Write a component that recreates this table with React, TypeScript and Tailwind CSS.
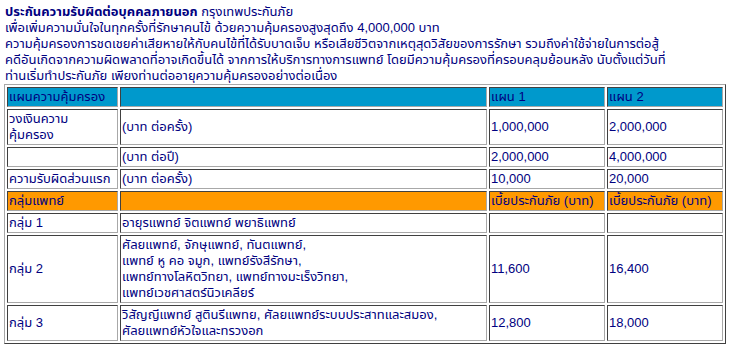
import React from "react";

const cell =
  "border border-solid border-t-[#404040] border-l-[#404040] border-r-[#a8a8a8] border-b-[#a8a8a8] px-[1px] py-[1px] align-middle text-left font-normal";

type Row = { label: string[]; desc: string[]; p1: string; p2: string };

const coverage: Row[] = [
  { label: ["วงเงินความ", "คุ้มครอง"], desc: ["(บาท ต่อครั้ง)"], p1: "1,000,000", p2: "2,000,000" },
  { label: [""], desc: ["(บาท ต่อปี)"], p1: "2,000,000", p2: "4,000,000" },
  { label: ["ความรับผิดส่วนแรก"], desc: ["(บาท ต่อครั้ง)"], p1: "10,000", p2: "20,000" },
];

const groups: Row[] = [
  { label: ["กลุ่ม 1"], desc: ["อายุรแพทย์ จิตแพทย์ พยาธิแพทย์"], p1: "", p2: "" },
  {
    label: ["กลุ่ม 2"],
    desc: [
      "ศัลยแพทย์, จักษุแพทย์, ทันตแพทย์,",
      "แพทย์ หู คอ จมูก, แพทย์รังสีรักษา,",
      "แพทย์ทางโลหิตวิทยา, แพทย์ทางมะเร็งวิทยา,",
      "แพทย์เวชศาสตร์นิวเคลียร์",
    ],
    p1: "11,600",
    p2: "16,400",
  },
  {
    label: ["กลุ่ม 3"],
    desc: ["วิสัญญีแพทย์ สูตินรีแพทย, ศัลยแพทย์ระบบประสาทและสมอง,", "ศัลยแพทย์หัวใจและทรวงอก"],
    p1: "12,800",
    p2: "18,000",
  },
];

function Lines({ lines }: { lines: string[] }) {
  return (
    <>
      {lines.map((l, i) => (
        <div key={i} className="whitespace-nowrap">
          {l || "\u00a0"}
        </div>
      ))}
    </>
  );
}

function BodyRow({ row }: { row: Row }) {
  return (
    <tr>
      <td className={cell + " bg-white"}>
        <Lines lines={row.label} />
      </td>
      <td className={cell + " bg-white"}>
        <Lines lines={row.desc} />
      </td>
      <td className={cell + " bg-white"}>{row.p1 || "\u00a0"}</td>
      <td className={cell + " bg-white"}>{row.p2 || "\u00a0"}</td>
    </tr>
  );
}

export default function App() {
  return (
    <div
      className="w-[729px] h-[346px] overflow-hidden bg-white text-[#000080] text-[13px] leading-4 pl-1 pt-1"
      style={{ fontFamily: '"Liberation Sans", Tahoma, "Noto Sans Thai", "DejaVu Sans", sans-serif' }}
    >
      <div className="pl-[1px]">
        <div className="whitespace-nowrap">
          <span className="font-bold">ประกันความรับผิดต่อบุคคลภายนอก</span> กรุงเทพประกันภัย
        </div>
        <div className="whitespace-nowrap">เพื่อเพิ่มความมั่นใจในทุกครั้งที่รักษาคนไข้ ด้วยความคุ้มครองสูงสุดถึง 4,000,000 บาท</div>
        <div className="whitespace-nowrap">
          ความคุ้มครองการชดเชยค่าเสียหายให้กับคนไข้ที่ได้รับบาดเจ็บ หรือเสียชีวิตจากเหตุสุดวิสัยของการรักษา รวมถึงค่าใช้จ่ายในการต่อสู้
        </div>
        <div className="whitespace-nowrap">
          คดีอันเกิดจากความผิดพลาดที่อาจเกิดขึ้นได้ จากการให้บริการทางการแพทย์ โดยมีความคุ้มครองที่ครอบคลุมย้อนหลัง นับตั้งแต่วันที่
        </div>
        <div className="whitespace-nowrap">ท่านเริ่มทำประกันภัย เพียงท่านต่ออายุความคุ้มครองอย่างต่อเนื่อง</div>
      </div>

      <table className="w-[721px] border-separate border-spacing-[2px] border border-solid border-t-[#a8a8a8] border-l-[#a8a8a8] border-r-[#404040] border-b-[#404040] table-fixed">
        <colgroup>
          <col className="w-[111px]" />
          <col className="w-[367px]" />
          <col className="w-[116px]" />
          <col className="w-[116px]" />
        </colgroup>
        <tbody>
          <tr className="bg-[#0099cc]">
            <td className={cell}>แผนความคุ้มครอง</td>
            <td className={cell}>&nbsp;</td>
            <td className={cell}>แผน 1</td>
            <td className={cell}>แผน 2</td>
          </tr>
          {coverage.map((r, i) => (
            <BodyRow key={i} row={r} />
          ))}
          <tr className="bg-[#ff9900]">
            <td className={cell}>กลุ่มแพทย์</td>
            <td className={cell}>&nbsp;</td>
            <td className={cell + " whitespace-nowrap"}>เบี้ยประกันภัย (บาท)</td>
            <td className={cell + " whitespace-nowrap"}>เบี้ยประกันภัย (บาท)</td>
          </tr>
          {groups.map((r, i) => (
            <BodyRow key={i} row={r} />
          ))}
        </tbody>
      </table>
      <div className="ml-[288px] mt-[3px] w-[3px] h-[2px] bg-[#ff6699]" />
    </div>
  );
}
